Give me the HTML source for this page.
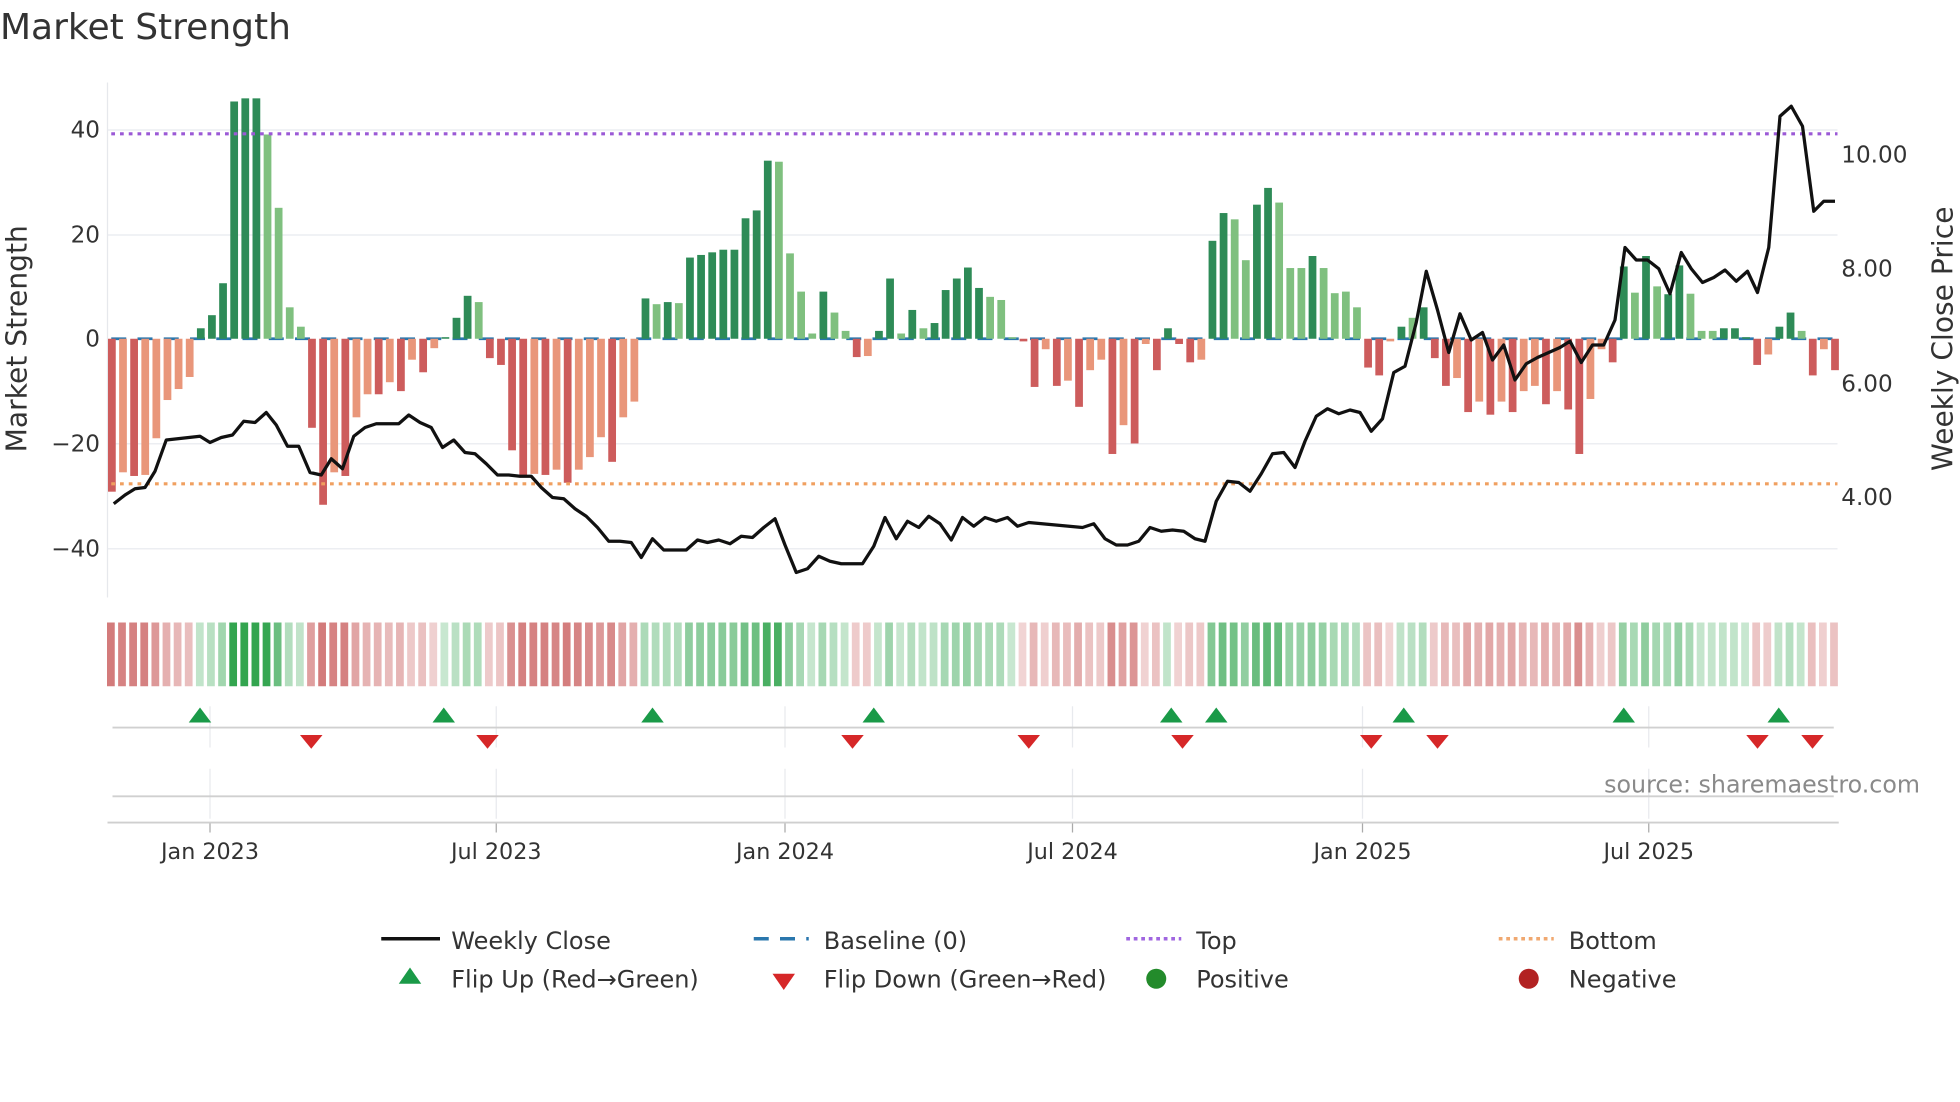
<!DOCTYPE html>
<html><head><meta charset="utf-8"><style>
html,body{margin:0;padding:0;background:#fff;width:1960px;height:1102px;overflow:hidden}
svg{display:block}
text{font-family:"DejaVu Sans","Liberation Sans",sans-serif;fill:#333}
</style></head><body>
<svg id="s" width="1960" height="1102" viewBox="0 0 1568 881.6" xmlns="http://www.w3.org/2000/svg">
<text x="0" y="31" font-size="28.8">Market Strength</text>
<g id="grid"></g>
<line x1="86" y1="66" x2="86" y2="478" stroke="#e6e8ec" stroke-width="1"/>
<g id="hm"></g>
<g id="bars"></g>
<line x1="89" y1="107" x2="1470" y2="107" stroke="#9b59d6" stroke-width="2.5" stroke-dasharray="3,4"/>
<line x1="89" y1="387" x2="1470" y2="387" stroke="#f0a060" stroke-width="2.5" stroke-dasharray="3,4"/>
<polyline id="price" fill="none" stroke="#111" stroke-width="2.6" stroke-linejoin="round"/>
<g font-size="18.5" text-anchor="end">
<text x="80" y="110">40</text><text x="80" y="194">20</text><text x="80" y="277">0</text>
<text x="80" y="361">−20</text><text x="80" y="445">−40</text></g>
<g font-size="18.5">
<text x="1473" y="130">10.00</text><text x="1473" y="221">8.00</text>
<text x="1473" y="313">6.00</text><text x="1473" y="404">4.00</text></g>
<text transform="translate(21,271) rotate(-90)" font-size="22.5" text-anchor="middle">Market Strength</text>
<text transform="translate(1562,271) rotate(-90)" font-size="22.5" text-anchor="middle">Weekly Close Price</text>
<line x1="90" y1="582" x2="1467" y2="582" stroke="#d0d0d0" stroke-width="1.5"/>
<line x1="90" y1="637" x2="1467" y2="637" stroke="#d0d0d0" stroke-width="1.5"/>
<line x1="86" y1="658" x2="1471" y2="658" stroke="#cfcfcf" stroke-width="1.5"/>
<g id="flips"></g>
<text x="1536" y="634" font-size="19" text-anchor="end" style="fill:#8a8a8a">source: sharemaestro.com</text>
<g font-size="17.8" text-anchor="middle">
<text x="168" y="687">Jan 2023</text><text x="397" y="687">Jul 2023</text><text x="628" y="687">Jan 2024</text>
<text x="858" y="687">Jul 2024</text><text x="1090" y="687">Jan 2025</text><text x="1319" y="687">Jul 2025</text></g>
<g font-size="19.2">
<line x1="305" y1="751" x2="352" y2="751" stroke="#111" stroke-width="2.8"/>
<text x="361" y="759">Weekly Close</text>
<line x1="603" y1="751" x2="647" y2="751" stroke="#2a77ad" stroke-width="2.8" stroke-dasharray="12,9"/>
<text x="659" y="759">Baseline (0)</text>
<line x1="901" y1="751" x2="945" y2="751" stroke="#a066e0" stroke-width="2.8" stroke-dasharray="3,3"/>
<text x="957" y="759">Top</text>
<line x1="1199" y1="751" x2="1243" y2="751" stroke="#f0a870" stroke-width="2.8" stroke-dasharray="3,3"/>
<text x="1255" y="759">Bottom</text>
<polygon points="328,774 319,787 337,787" fill="#1a9a48"/>
<text x="361" y="790">Flip Up (Red→Green)</text>
<polygon points="618,779 636,779 627,792" fill="#d62728"/>
<text x="659" y="790">Flip Down (Green→Red)</text>
<circle cx="925" cy="783" r="8" fill="#238b2b"/>
<text x="957" y="790">Positive</text>
<circle cx="1223" cy="783" r="8" fill="#b22222"/>
<text x="1255" y="790">Negative</text>
</g>
</svg>
<script>
var NS="http://www.w3.org/2000/svg";
function el(p,t,a){var e=document.createElementNS(NS,t);for(var k in a)e.setAttribute(k,a[k]);document.getElementById(p).appendChild(e);return e;}
var V=[[-29.2,1],[-25.5,0],[-26.2,1],[-26,0],[-19,0],[-11.7,0],[-9.6,0],[-7.3,0],[2,1],[4.5,1],[10.6,1],[45.3,1],[45.9,1],[45.9,1],[39,0],[25,0],[6,0],[2.3,0],
[-17,1],[-31.7,1],[-25.5,0],[-26.2,1],[-15,0],[-10.6,0],[-10.6,1],[-8.3,0],[-10,1],[-4,0],[-6.4,1],[-1.8,0],[0.3,1],[4,1],[8.2,1],[7,0],
[-3.7,1],[-5,1],[-21.3,1],[-26.2,1],[-25.8,0],[-26,1],[-25,0],[-27.5,1],[-25,0],[-22.6,0],[-18.8,0],[-23.5,1],[-15,0],[-12,0],
[7.7,1],[6.6,0],[7,1],[6.8,0],[15.5,1],[16,1],[16.5,1],[17,1],[17,1],[23,1],[24.5,1],[34,1],[33.8,0],[16.3,0],[9,0],[1,0],[9,1],[5,0],[1.5,0],
[-3.5,1],[-3.3,0],[1.5,1],[11.5,1],[1,0],[5.5,1],[2,0],[3,1],[9.3,1],[11.5,1],[13.6,1],[9.7,1],[8,0],[7.4,0],[0.3,0],[-0.5,1],
[-9.2,1],[-2,0],[-9,1],[-8,0],[-13,1],[-6,0],[-4,0],[-22,1],[-16.5,0],[-20,1],[-1,0],[-6,1],[2,1],[-1,1],[-4.5,1],[-4,0],
[18.7,1],[24,1],[22.8,0],[15,0],[25.6,1],[28.8,1],[26,0],[13.5,0],[13.5,0],[15.8,1],[13.5,0],[8.7,0],[9,0],[6,0],
[-5.5,1],[-7,1],[-0.5,0],[2.3,1],[4,0],[6,1],[-3.7,1],[-9,1],[-7.5,0],[-14,1],[-12,0],[-14.5,1],[-12,0],[-14,1],[-10,0],[-9,0],[-12.5,1],[-10,0],[-13.5,1],[-22,1],[-11.5,0],[-2,0],[-4.5,1],
[13.8,1],[8.8,0],[15.8,1],[10,0],[8.5,1],[14,1],[8.6,0],[1.5,0],[1.5,0],[2,1],[2,1],[0.3,1],[-5,1],[-3,0],[2.3,1],[5,1],[1.5,0],[-7,1],[-2,0],[-6,1]];
var n=V.length,x0=89.5,dx=(1468-89.5)/(n-1);
[104,188,355,439].forEach(function(y){el("grid","line",{x1:86,x2:1470,y1:y,y2:y,stroke:"#eceef2","stroke-width":1.2});});
[168,397,628,858,1090,1319].forEach(function(x){el("grid","line",{x1:x,x2:x,y1:565,y2:598,stroke:"#e8eaee","stroke-width":1});el("grid","line",{x1:x,x2:x,y1:615,y2:655,stroke:"#e8eaee","stroke-width":1});el("grid","line",{x1:x,x2:x,y1:658,y2:666,stroke:"#aaa","stroke-width":1});});
var Z=271,K=4.19;
el("bars","line",{x1:89,x2:1470,y1:Z,y2:Z,stroke:"#2a77ad","stroke-width":2.2,"stroke-dasharray":"12,9"});
for(var i=0;i<n;i++){var v=V[i][0],d=V[i][1],x=x0+i*dx;
 var c=v>=0?(d?"#2e8b57":"#7fc07f"):(d?"#cd5c5c":"#e9967a");
 var h=Math.abs(v)*K; el("bars","rect",{x:x-3.1,y:v>=0?Z-h:Z,width:6.2,height:Math.max(h,0.5),fill:c});
 var col=v>=0?"rgba(40,160,70,"+(0.25+0.7*Math.min(1,Math.abs(v)/40))+")":"rgba(200,90,90,"+(0.25+0.55*Math.min(1,Math.abs(v)/28))+")";
 el("hm","rect",{x:x-3.9,y:498,width:6.2,height:51,fill:col});
}
var P=[[91,403],[100,396],[108,391],[116,390],[124,377],[133,352],[142,351],[151,350],[160,349],[168,354],[177,350],[186,348],[195,337],[204,338],[213,330],[221,340],[230,357],[239,357],[248,378],[257,380],[265,367],[274,375],[283,349],[292,342],[301,339],[310,339],[319,339],[327,332],[336,338],[345,342],[354,358],[363,352],[372,362],[380,363],[389,371],[398,380],[407,380],[416,381],[425,381],[433,390],[442,398],[451,399],[460,407],[469,413],[478,422],[487,433],[496,433],[505,434],[513,446],[522,431],[531,440],[540,440],[549,440],[558,432],[566,434],[575,432],[584,435],[593,429],[602,430],[611,422],[620,415],[628,436],[637,458],[646,455],[655,445],[664,449],[673,451],[681,451],[690,451],[699,437],[708,414],[717,431],[726,417],[735,422],[743,413],[752,419],[761,432],[770,414],[779,421],[788,414],[797,417],[806,414],[814,421],[823,418],[866,422],[875,419],[884,431],[893,436],[902,436],[911,433],[920,422],[929,425],[938,424],[947,425],[956,431],[964,433],[973,401],[982,385],[991,386],[1000,393],[1009,379],[1018,363],[1027,362],[1036,374],[1044,353],[1053,333],[1062,327],[1071,331],[1080,328],[1088,330],[1097,345],[1106,335],[1115,298],[1124,293],[1133,258],[1141,217],[1150,248],[1159,282],[1168,251],[1177,272],[1186,266],[1194,288],[1203,276],[1212,304],[1221,291],[1230,286],[1239,282],[1248,278],[1256,273],[1265,290],[1274,276],[1283,276],[1292,256],[1300,198],[1309,208],[1318,208],[1327,215],[1336,235],[1345,202],[1353,215],[1362,226],[1371,222],[1380,216],[1389,225],[1398,217],[1406,234],[1415,198],[1424,93],[1433,85],[1442,101],[1451,169],[1459,161],[1468,161]];
document.getElementById("price").setAttribute("points",P.map(function(p){return p.join(",")}).join(" "));
[160,355,522,699,937,973,1123,1299,1423].forEach(function(x){el("flips","polygon",{points:(x)+",566 "+(x-9)+",578 "+(x+9)+",578",fill:"#1a9a48"});});
[249,390,682,823,946,1097,1150,1406,1450].forEach(function(x){el("flips","polygon",{points:(x-9)+",588 "+(x+9)+",588 "+x+",599",fill:"#d62728"});});
</script>
</body></html>
